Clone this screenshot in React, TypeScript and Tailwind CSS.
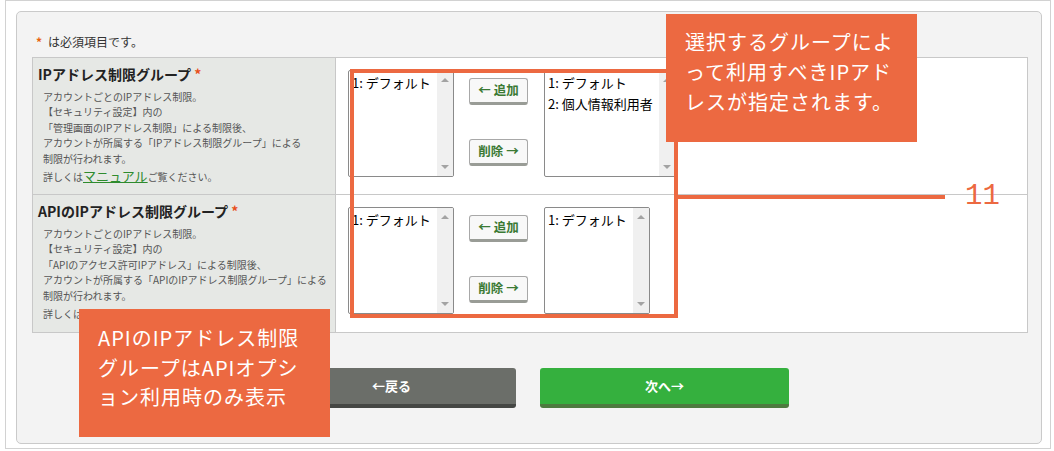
import React from 'react'

const rows = [
  {
    title: 'IPアドレス制限グループ',
    lines: [
      'アカウントごとのIPアドレス制限。',
      '【セキュリティ設定】内の',
      '「管理画面のIPアドレス制限」による制限後、',
      'アカウントが所属する「IPアドレス制限グループ」による',
      '制限が行われます。',
    ],
    left: ['1: デフォルト'],
    right: ['1: デフォルト', '2: 個人情報利用者'],
    rightW: 'w-[132px]',
  },
  {
    title: 'APIのIPアドレス制限グループ',
    lines: [
      'アカウントごとのIPアドレス制限。',
      '【セキュリティ設定】内の',
      '「APIのアクセス許可IPアドレス」による制限後、',
      'アカウントが所属する「APIのIPアドレス制限グループ」による',
      '制限が行われます。',
    ],
    left: ['1: デフォルト'],
    right: ['1: デフォルト'],
    rightW: 'w-[106px]',
  },
]

function ListBox({ items, w }: { items: string[]; w: string }) {
  return (
    <div className={`${w} h-[107px] shrink-0 flex border border-[#8a8a8a] rounded-[2px] bg-white overflow-hidden`}>
      <div className="flex-1 pl-[3px] pt-[1px] text-[13px] leading-[21px] text-black whitespace-nowrap">
        {items.map((it) => (
          <div key={it}>{it}</div>
        ))}
      </div>
      <div className="w-[16px] bg-[#f0f0f0] flex flex-col items-center justify-between py-[7px]">
        <span className="w-0 h-0 border-x-[4px] border-x-transparent border-b-[4px] border-b-[#a3a3a3]" />
        <span className="w-0 h-0 border-x-[4px] border-x-transparent border-t-[4px] border-t-[#a3a3a3]" />
      </div>
    </div>
  )
}

function MoveButton({ label }: { label: string }) {
  return (
    <div className="w-[59px] h-[27px] flex items-center justify-center bg-[#f8f8f8] border border-[#a8a8a8] border-b-[3px] border-b-[#999c96] rounded-[3px] text-[12.5px] font-bold text-[#3b7a34] whitespace-nowrap">
      {label}
    </div>
  )
}

export default function App() {
  return (
    <div className="relative w-[1054px] h-[451px] bg-white overflow-hidden font-['Noto_Sans_CJK_JP',sans-serif]">
      {/* outer frame */}
      <div className="ml-[5px] w-[1046px] h-[449px] border border-[#d2d2d2] pt-[10px] pl-[10px]">
        {/* panel */}
        <div className="w-[1026px] h-[433px] bg-[#f3f3f3] border border-[#cacaca] rounded-[5px] px-[15px] pt-[22px]">
          <div className="ml-[4px] text-[12px] leading-[16px] text-[#333] flex items-center gap-[6px]">
            <span className="text-[#e8620f] font-bold">*</span>
            <span>は必須項目です。</span>
          </div>

          {/* table */}
          <div className="mt-[7px] w-[996px] border border-[#c8c8c8] bg-white">
            {rows.map((r, i) => (
              <div key={r.title} className={`flex h-[137px] ${i === 0 ? 'border-b border-[#c8c8c8]' : ''}`}>
                <div className="w-[303px] shrink-0 bg-[#e6e8e5] border-r border-[#c8c8c8] pl-[5px] pt-[6px]">
                  <div className="text-[14px] leading-[20px] font-bold text-[#222] whitespace-nowrap">
                    {r.title} <span className="text-[#e8501c]">*</span>
                  </div>
                  <div className="mt-[5px] pl-[5px] text-[10px] leading-[15.4px] text-[#555] whitespace-nowrap">
                    {r.lines.map((l) => (
                      <div key={l}>{l}</div>
                    ))}
                    <div className="leading-[20px]">
                      詳しくは
                      <span className="text-[13px] text-[#2e8b2e] underline">マニュアル</span>
                      ご覧ください。
                    </div>
                  </div>
                </div>
                <div className="flex-1 flex items-start pl-[12px] pt-[12px]">
                  <ListBox items={r.left} w="w-[106px]" />
                  <div className="ml-[15px] pt-[8px] flex flex-col gap-[34px]">
                    <MoveButton label="← 追加" />
                    <MoveButton label="削除 →" />
                  </div>
                  <div className="ml-[16px]">
                    <ListBox items={r.right} w={r.rightW} />
                  </div>
                </div>
              </div>
            ))}
          </div>

          {/* buttons */}
          <div className="mt-[35px] flex justify-center gap-[24px] pr-[2px]">
            <div className="w-[249px] h-[40px] flex items-center justify-center bg-[#6b6e69] border-b-[4px] border-[#454744] rounded-[3px] text-white font-bold text-[13px]">
              ←戻る
            </div>
            <div className="w-[249px] h-[40px] flex items-center justify-center bg-[#35b03e] border-b-[4px] border-[#4d7a3f] rounded-[3px] text-white font-bold text-[13px]">
              次へ→
            </div>
          </div>
        </div>
      </div>

      {/* annotations */}
      <div className="absolute left-[350px] top-[69px] w-[328px] h-[249px] border-[4px] border-[#ec6941]" />
      <div className="absolute left-[678px] top-[195px] w-[267px] h-[4px] bg-[#ec6941]" />
      <div className="absolute left-[965px] top-[180px] text-[29px] leading-[34px] text-[#ec6941] font-['Liberation_Mono',monospace]">
        11
      </div>

      <div className="absolute left-[666px] top-[14px] w-[251px] h-[128px] bg-[#ec6941] pl-[19px] pt-[13px] text-white text-[20px] leading-[30px] tracking-[1px] whitespace-nowrap">
        選択するグループによ
        <br />
        って利用すべきIPアド
        <br />
        レスが指定されます。
      </div>

      <div className="absolute left-[79px] top-[309px] w-[251px] h-[128px] bg-[#ec6941] pl-[19px] pt-[14px] text-white text-[20px] leading-[29.5px] tracking-[1px] whitespace-nowrap">
        APIのIPアドレス制限
        <br />
        グループはAPIオプシ
        <br />
        ョン利用時のみ表示
      </div>
    </div>
  )
}
